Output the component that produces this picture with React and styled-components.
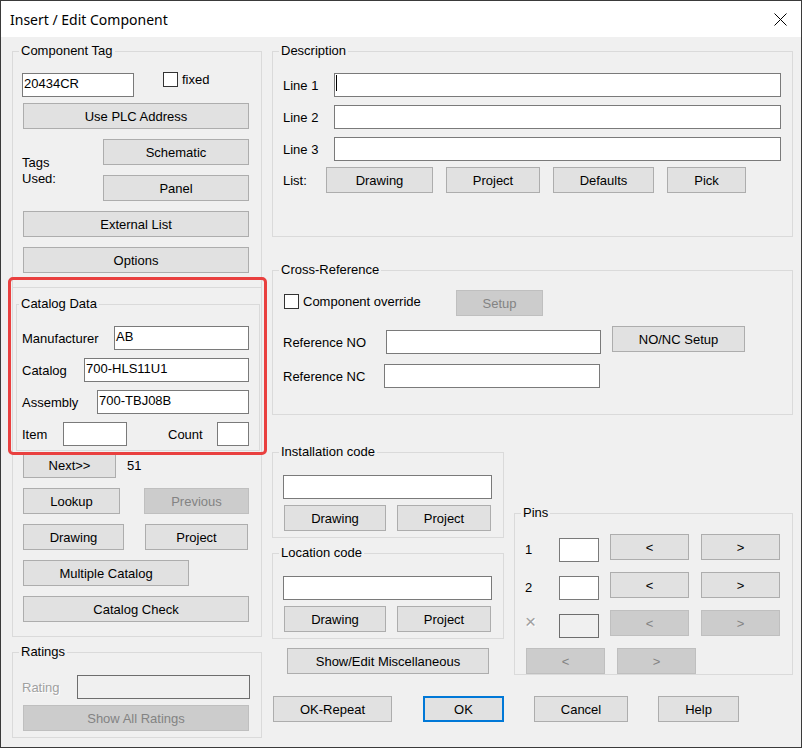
import React from 'react';
import styled, { createGlobalStyle } from 'styled-components';

const GlobalStyle = createGlobalStyle`
  html, body {
    margin: 0;
    padding: 0;
    background: #f0f0f0;
  }
  * {
    box-sizing: border-box;
  }
`;

const Window = styled.div`
  position: relative;
  width: 802px;
  height: 748px;
  border: 1px solid #3a3a3a;
  background: #f0f0f0;
  font-family: "Liberation Sans", Arial, sans-serif;
  font-size: 13px;
  color: #000;
  overflow: hidden;
`;

const TitleBar = styled.div`
  height: 36px;
  background: #fff;
  display: flex;
  align-items: center;
  justify-content: space-between;
  padding: 1px 14px 0 9px;
  font-family: "Noto Sans", "Segoe UI", sans-serif;
  font-size: 14px;
`;

const CloseIcon = () => (
  <svg width="13" height="13" viewBox="0 0 13 13">
    <path d="M0.5 0.5 L12.5 12.5 M12.5 0.5 L0.5 12.5" stroke="#000" strokeWidth="1" />
  </svg>
);

const Body = styled.div`
  display: flex;
  gap: 10px;
  padding: 14px 0 0 11px;
`;

const Column = styled.div`
  display: flex;
  flex-direction: column;
  width: ${p => p.$w}px;
`;

const Group = styled.div`
  position: relative;
  display: flex;
  flex-direction: column;
  border: 1px solid #dadada;
  height: ${p => p.$h}px;
  padding: ${p => p.$pad || '22px 11px 0 10px'};
`;

const Caption = styled.span`
  position: absolute;
  top: -9px;
  left: ${p => p.$left ?? 6}px;
  padding: 0 2px;
  background: #f0f0f0;
  line-height: 15px;
  white-space: nowrap;
`;

const Button = styled.button`
  flex: none;
  width: ${p => (p.$w ? `${p.$w}px` : 'auto')};
  height: 26px;
  padding: 2px 0 0;
  margin: 0;
  border: ${p => (p.$primary ? '2px solid #0078d7' : '1px solid #adadad')};
  background: #e1e1e1;
  font: inherit;
  color: #000;
  line-height: ${p => (p.$primary ? '20px' : '22px')};
  text-align: center;
  white-space: nowrap;

  &:disabled {
    background: #cccccc;
    border-color: #bfbfbf;
    color: #838383;
  }
`;

const TextBox = styled.div`
  flex: ${p => (p.$w ? 'none' : '1')};
  width: ${p => (p.$w ? `${p.$w}px` : 'auto')};
  height: 24px;
  border: 1px solid ${p => (p.$disabled ? '#6d6d6d' : '#7a7a7a')};
  background: ${p => (p.$disabled ? '#f0f0f0' : '#fff')};
  padding: 2px 1px 0;
  line-height: 15px;
  white-space: nowrap;
  overflow: hidden;
`;

const Caret = styled.span`
  display: block;
  width: 1px;
  height: 16px;
  margin-top: -1px;
  background: #000;
`;

const Label = styled.span`
  flex: none;
  width: ${p => (p.$w ? `${p.$w}px` : 'auto')};
  line-height: 15px;
  white-space: nowrap;
  color: ${p => (p.$disabled ? '#a0a0a0' : '#000')};
  text-shadow: ${p => (p.$disabled ? '1px 1px 0 #fff' : 'none')};
`;

const Row = styled.div`
  display: flex;
  align-items: ${p => p.$align || 'center'};
  justify-content: ${p => p.$justify || 'flex-start'};
  gap: ${p => p.$gap || 0}px;
  margin-top: ${p => p.$mt || 0}px;
  margin-left: ${p => p.$ml || 0}px;
  margin-right: ${p => p.$mr || 0}px;
`;

const CheckLabel = styled.label`
  display: flex;
  align-items: flex-start;
  gap: 4px;
  line-height: 16px;
  width: ${p => (p.$w ? `${p.$w}px` : 'auto')};
  margin-top: ${p => p.$mt || 0}px;
  margin-left: ${p => p.$ml || 0}px;
`;

const CheckBox = styled.span`
  flex: none;
  width: 15px;
  height: 15px;
  border: 1px solid #333;
  background: #fff;
`;

const TagsLabel = styled.div`
  width: 80px;
  margin-left: -1px;
  padding-top: 16px;
  line-height: 16px;
`;

const Stack = styled.div`
  display: flex;
  flex-direction: column;
  gap: 10px;
  margin-left: auto;
`;

const Divider = styled.div`
  margin: 14px -12px 0 -10px;
  border-top: 1px solid #dadada;
`;

const CatalogGroup = styled(Group)`
  margin: 16px -11px 0 -7px;
  padding: 21px 10px 4px 5px;
  gap: 8px;
`;

const Highlight = styled.div`
  position: absolute;
  left: 7px;
  top: 276px;
  width: 259px;
  height: 178px;
  border: 3px solid #e9403f;
  border-radius: 5px;
  pointer-events: none;
`;

const Count = styled.span`
  margin-left: 11px;
`;

const PinsGroup = styled(Group)`
  gap: 10px;
`;

const PinLabel = styled(Label)`
  width: 34px;
  margin-top: ${p => (p.$x ? '0' : '4px')};
  line-height: 24px;
  font-size: ${p => (p.$x ? '19px' : '13px')};
  font-weight: 300;
`;

const PinBox = styled(TextBox)`
  margin-top: 4px;
  margin-right: 11px;
`;

export default function App() {
  return (
    <>
      <GlobalStyle />
      <Window>
        <TitleBar>
          <span>Insert / Edit Component</span>
          <CloseIcon />
        </TitleBar>
        <Body>
          <Column $w={250}>
            <Group $h={586} $pad="21px 12px 0 10px">
              <Caption>Component Tag</Caption>
              <Row $align="flex-start" $ml={-1}>
                <TextBox $w={112}>20434CR</TextBox>
                <CheckLabel $ml={29} $mt={-1}>
                  <CheckBox />
                  fixed
                </CheckLabel>
              </Row>
              <Row $mt={6}>
                <Button $w={226}>Use PLC Address</Button>
              </Row>
              <Row $mt={10} $align="flex-start">
                <TagsLabel>
                  Tags
                  <br />
                  Used:
                </TagsLabel>
                <Stack>
                  <Button $w={146}>Schematic</Button>
                  <Button $w={146}>Panel</Button>
                </Stack>
              </Row>
              <Row $mt={10}>
                <Button $w={226}>External List</Button>
              </Row>
              <Row $mt={10}>
                <Button $w={226}>Options</Button>
              </Row>
              <Divider />
              <CatalogGroup>
                <Caption $left={2}>Catalog Data</Caption>
                <Row $justify="space-between">
                  <Label>Manufacturer</Label>
                  <TextBox $w={135}>AB</TextBox>
                </Row>
                <Row $justify="space-between">
                  <Label>Catalog</Label>
                  <TextBox $w={165}>700-HLS11U1</TextBox>
                </Row>
                <Row $justify="space-between">
                  <Label>Assembly</Label>
                  <TextBox $w={152}>700-TBJ08B</TextBox>
                </Row>
                <Row>
                  <Label $w={41}>Item</Label>
                  <TextBox $w={64} />
                  <Label style={{ marginLeft: 41 }}>Count</Label>
                  <TextBox $w={32} style={{ marginLeft: 'auto' }} />
                </Row>
              </CatalogGroup>
              <Row $mt={1}>
                <Button $w={93}>Next&gt;&gt;</Button>
                <Count>51</Count>
              </Row>
              <Row $mt={10} $justify="space-between">
                <Button $w={97}>Lookup</Button>
                <Button $w={105} disabled>
                  Previous
                </Button>
              </Row>
              <Row $mt={10} $justify="space-between" $mr={1}>
                <Button $w={101}>Drawing</Button>
                <Button $w={103}>Project</Button>
              </Row>
              <Row $mt={10}>
                <Button $w={166}>Multiple Catalog</Button>
              </Row>
              <Row $mt={10}>
                <Button $w={226}>Catalog Check</Button>
              </Row>
            </Group>
            <Group $h={86} $pad="22px 12px 0 10px" style={{ marginTop: 15 }}>
              <Caption>Ratings</Caption>
              <Row $justify="space-between" $ml={-1} $mr={-1}>
                <Label $disabled>Rating</Label>
                <TextBox $w={173} $disabled />
              </Row>
              <Row $mt={6}>
                <Button $w={226} disabled>
                  Show All Ratings
                </Button>
              </Row>
            </Group>
          </Column>

          <Column $w={521}>
            <Group $h={186} $pad="21px 11px 0 10px">
              <Caption>Description</Caption>
              <Row>
                <Label $w={51}>Line 1</Label>
                <TextBox>
                  <Caret />
                </TextBox>
              </Row>
              <Row $mt={8}>
                <Label $w={51}>Line 2</Label>
                <TextBox />
              </Row>
              <Row $mt={8}>
                <Label $w={51}>Line 3</Label>
                <TextBox />
              </Row>
              <Row $mt={6} $gap={13}>
                <Label $w={30}>List:</Label>
                <Button $w={107}>Drawing</Button>
                <Button $w={94}>Project</Button>
                <Button $w={101}>Defaults</Button>
                <Button $w={79}>Pick</Button>
              </Row>
            </Group>

            <Group $h={145} $pad="19px 11px 0 10px" style={{ marginTop: 33 }}>
              <Caption>Cross-Reference</Caption>
              <Row $align="flex-start">
                <CheckLabel $w={172} $ml={1} $mt={4}>
                  <CheckBox />
                  Component override
                </CheckLabel>
                <Button $w={87} disabled>
                  Setup
                </Button>
              </Row>
              <Row $mt={14}>
                <Label $w={103}>Reference NO</Label>
                <TextBox $w={215} />
                <Button $w={133} style={{ marginLeft: 11, alignSelf: 'flex-start', marginTop: -4 }}>
                  NO/NC Setup
                </Button>
              </Row>
              <Row $mt={10}>
                <Label $w={101}>Reference NC</Label>
                <TextBox $w={216} />
              </Row>
            </Group>

            <Row $align="flex-start" $gap={10}>
              <Column $w={232} style={{ marginTop: 37 }}>
                <Group $h={86}>
                  <Caption>Installation code</Caption>
                  <TextBox $w={209} />
                  <Row $mt={6} $ml={1} $gap={11}>
                    <Button $w={102}>Drawing</Button>
                    <Button $w={94}>Project</Button>
                  </Row>
                </Group>
                <Group $h={86} style={{ marginTop: 15 }}>
                  <Caption>Location code</Caption>
                  <TextBox $w={209} />
                  <Row $mt={6} $ml={1} $gap={11}>
                    <Button $w={102}>Drawing</Button>
                    <Button $w={94}>Project</Button>
                  </Row>
                </Group>
                <Row $mt={9} $ml={15}>
                  <Button $w={202}>Show/Edit Miscellaneous</Button>
                </Row>
              </Column>

              <PinsGroup $h={162} $pad="20px 0 0 10px" style={{ width: 279, marginTop: 98 }}>
                <Caption>Pins</Caption>
                <Row $align="flex-start">
                  <PinLabel>1</PinLabel>
                  <PinBox $w={40} />
                  <Row $gap={12}>
                    <Button $w={79}>&lt;</Button>
                    <Button $w={79}>&gt;</Button>
                  </Row>
                </Row>
                <Row $align="flex-start">
                  <PinLabel>2</PinLabel>
                  <PinBox $w={40} />
                  <Row $gap={12}>
                    <Button $w={79}>&lt;</Button>
                    <Button $w={79}>&gt;</Button>
                  </Row>
                </Row>
                <Row $align="flex-start">
                  <PinLabel $disabled $x>
                    ×
                  </PinLabel>
                  <PinBox $w={40} $disabled />
                  <Row $gap={12}>
                    <Button $w={79} disabled>
                      &lt;
                    </Button>
                    <Button $w={79} disabled>
                      &gt;
                    </Button>
                  </Row>
                </Row>
                <Row $ml={1} $gap={12}>
                  <Button $w={79} disabled>
                    &lt;
                  </Button>
                  <Button $w={79} disabled>
                    &gt;
                  </Button>
                </Row>
              </PinsGroup>
            </Row>

            <Row $mt={21} $ml={1}>
              <Button $w={119}>OK-Repeat</Button>
              <Button $w={81} $primary style={{ marginLeft: 31 }}>
                OK
              </Button>
              <Button $w={94} style={{ marginLeft: 30 }}>
                Cancel
              </Button>
              <Button $w={81} style={{ marginLeft: 30 }}>
                Help
              </Button>
            </Row>
          </Column>
        </Body>
        <Highlight />
      </Window>
    </>
  );
}
